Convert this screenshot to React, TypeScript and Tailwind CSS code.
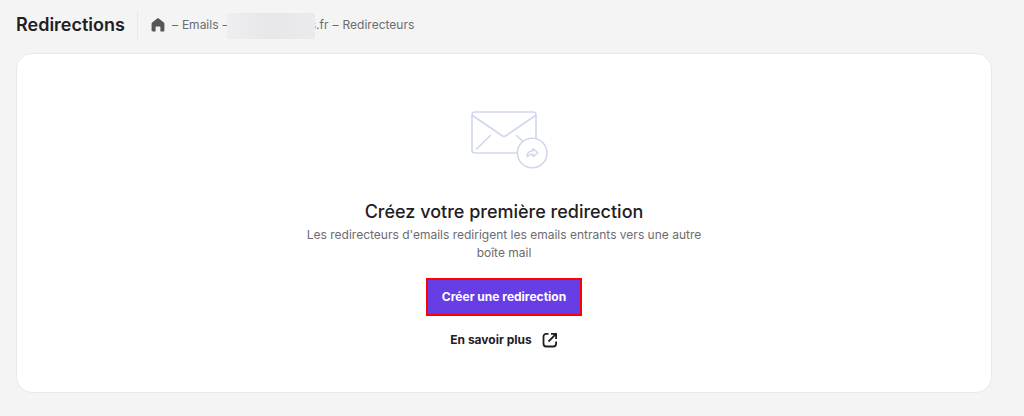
import type { ReactNode } from "react";

type CrumbProps = {
  children: ReactNode;
  href?: string;
};

function Crumb({ children, href }: CrumbProps) {
  return (
    <li className="flex gap-1">
      <span aria-hidden="true">–</span>
      {href ? <a href={href}>{children}</a> : <span aria-current="page">{children}</span>}
    </li>
  );
}

function HomeIcon() {
  return (
    <svg aria-hidden="true" className="h-4 w-4" fill="#56575b" viewBox="0 0 16 16">
      <path d="M7.2 1.5a1.3 1.3 0 0 1 1.6 0l5 3.9c.4.3.6.8.6 1.3v6.6c0 .8-.5 1.2-1.2 1.2h-2.8v-3.9c0-.6-.4-1-1-1H6.6c-.6 0-1 .4-1 1v3.9H2.8c-.7 0-1.2-.4-1.2-1.2V6.7c0-.5.2-1 .6-1.3z" />
    </svg>
  );
}

function ExternalIcon() {
  return (
    <svg
      aria-hidden="true"
      className="h-4 w-4"
      fill="none"
      stroke="currentColor"
      strokeWidth="1.8"
      viewBox="0 0 16 16"
    >
      <path d="M6.5 1.9H4.2a2.7 2.7 0 0 0-2.7 2.7v7.2a2.7 2.7 0 0 0 2.7 2.7h7.2a2.7 2.7 0 0 0 2.7-2.7V9.5" />
      <path d="M9 1.9h5.1V7M13.8 2.2 6.5 9.5" />
    </svg>
  );
}

function ForwardMailArt() {
  return (
    <svg
      aria-hidden="true"
      className="h-15 w-22"
      fill="none"
      stroke="#d0d7ec"
      strokeLinecap="round"
      strokeLinejoin="round"
      strokeWidth="1.6"
      viewBox="-8 1 88 60"
    >
      <rect height="41" rx="3" width="64" x="4" y="3" />
      <path d="M4.5 6.5 34.500 27q1.500 1 3 0L67.500 6.500" />
      <path d="M8.500 40 22.500 26.500M48.500 26.500l7 6.500" />
      <circle cx="64.2" cy="44" fill="#fff" r="14.8" />
      <path
        d="M65 39.600 69.900 43.700 65 47.600v-2.300c-2.600-.1-4.200.5-6 2.400.1-3.700 2.300-5.700 6-5.900z"
        strokeWidth="1.4"
      />
    </svg>
  );
}

export default function App() {
  return (
    <div className="min-h-screen bg-[#f4f4f4] pt-[9px] pr-8 pb-6 pl-4 font-['Inter',sans-serif] text-[#1f2023]">
      <header className="flex h-8 items-center">
        <h1 className="text-lg font-semibold">Redirections</h1>
        <nav
          aria-label="Fil d'Ariane"
          className="ml-3 flex h-7 items-center border-l border-[#e8e8ea] pl-3"
        >
          <ol className="flex items-center gap-1 text-xs text-[#6b6c70]">
            <li className="mr-0.5">
              <a aria-label="Accueil" className="block" href="#">
                <HomeIcon />
              </a>
            </li>
            <Crumb href="#">Emails</Crumb>
            <Crumb href="#">
              <span className="relative inline-block w-24 text-right">
                s.fr
                <span className="absolute -top-1 right-3.5 h-6.5 w-22 bg-linear-to-r from-[#eeeef0] via-[#e7e7ea] to-[#ebebed]" />
              </span>
            </Crumb>
            <Crumb>Redirecteurs</Crumb>
          </ol>
        </nav>
      </header>

      <main className="mt-3 flex flex-col items-center rounded-2xl border border-[#e9e9eb] bg-white px-4 pt-14 pb-11">
        <ForwardMailArt />
        <h2 className="mt-7 text-lg leading-7 font-medium">Créez votre première redirection</h2>
        <p className="max-w-100 text-center text-xs leading-[18px] text-[#6b6c70]">
          Les redirecteurs d'emails redirigent les emails entrants vers une autre boîte mail
        </p>
        <button
          className="mt-4 h-[38px] border-2 border-[#ff0000] bg-[#673de6] px-3.5 text-xs font-bold text-white"
          type="button"
        >
          Créer une redirection
        </button>
        <a className="mt-4 flex items-center gap-2.5 text-xs leading-4 font-bold" href="#">
          En savoir plus
          <ExternalIcon />
        </a>
      </main>
    </div>
  );
}
